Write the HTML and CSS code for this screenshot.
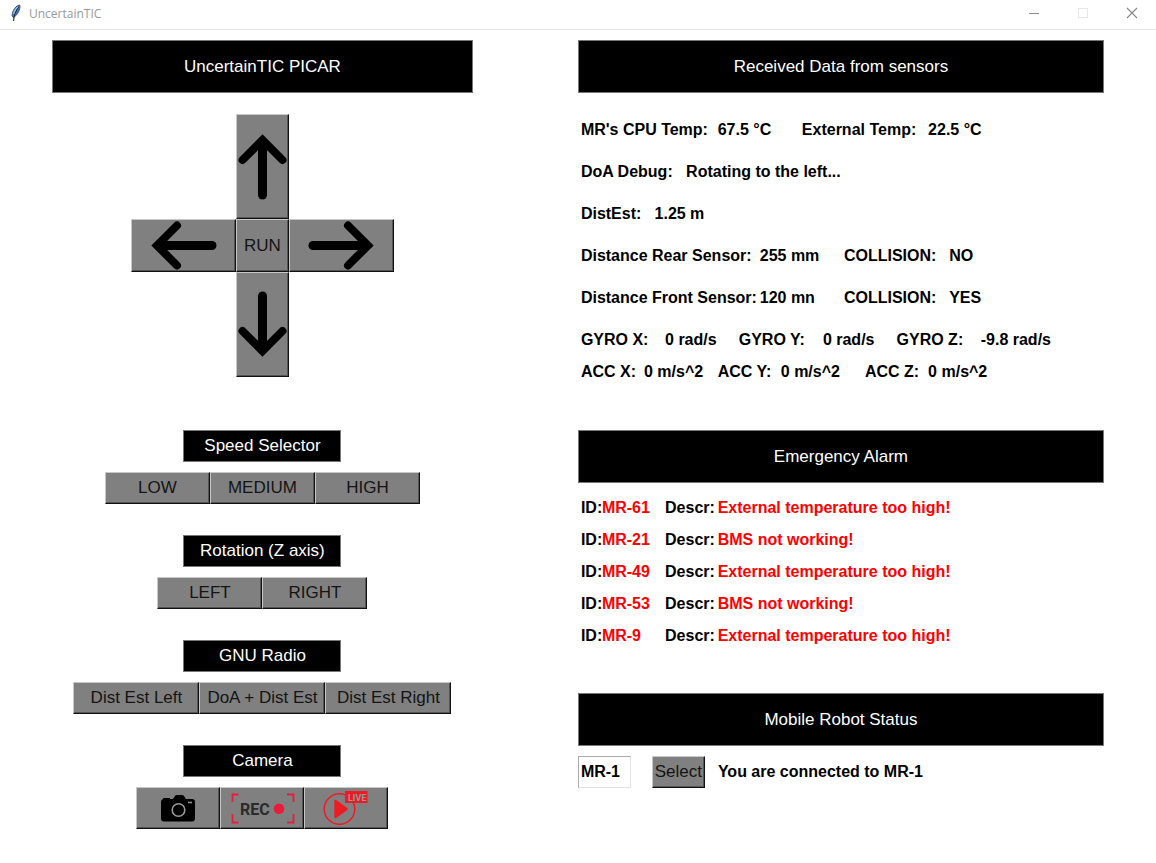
FILE: index.html
```html
<!DOCTYPE html>
<html lang="en">
<head>
<meta charset="utf-8">
<meta name="viewport" content="width=device-width, initial-scale=1">
<title>UncertainTIC</title>
<link rel="stylesheet" href="styles.css">
</head>
<body>
<header class="titlebar">
  <svg class="feather" viewBox="0 0 12 18" aria-hidden="true">
    <path d="M9.800 1C6 1.500 2.500 6 2 11.500L3.200 13.600C7.500 11.500 10.800 5 9.800 1Z" fill="#4377bd" stroke="#33465e" stroke-width="0.800"/>
    <path d="M8.500 3C5.500 7 3.800 11 3.600 17" fill="none" stroke="#222" stroke-width="1.100"/>
    <path d="M7.800 2.800C5.800 4.500 4.200 7.500 3.600 10" fill="none" stroke="#9dc0ea" stroke-width="1.200"/>
  </svg>
  <span class="titlebar-name">UncertainTIC</span>
  <div class="window-controls">
    <button type="button" aria-label="Minimize"><svg viewBox="0 0 12 12"><path d="M1 6.500H11" stroke="#8c8c8c"/></svg></button>
    <button type="button" aria-label="Maximize" disabled><svg viewBox="0 0 12 12"><rect x="1.500" y="1.500" width="9" height="9" fill="none" stroke="#e6e6e6"/></svg></button>
    <button type="button" aria-label="Close"><svg viewBox="0 0 12 12"><path d="M1 1L11 11M11 1L1 11" stroke="#858585" stroke-width="1.100"/></svg></button>
  </div>
</header>

<main class="layout">
  <section class="controls">
    <h1 class="banner">UncertainTIC PICAR</h1>

    <div class="dpad">
      <button type="button" class="key up" aria-label="Forward"><svg class="arrow-v" viewBox="0 0 53 105"><path class="wing" d="M6.500 46L26.500 26L46.500 46"/><path class="stem" d="M26.500 28V81"/></svg></button>
      <button type="button" class="key left" aria-label="Left"><svg class="arrow-h" viewBox="0 0 105 53"><path class="wing" d="M46 6.500L26 26.500L46 46.500"/><path class="stem" d="M28 26.500H81"/></svg></button>
      <button type="button" class="key run">RUN</button>
      <button type="button" class="key right" aria-label="Right"><svg class="arrow-h" viewBox="0 0 105 53"><path class="wing" d="M59 6.500L79 26.500L59 46.500"/><path class="stem" d="M77 26.500H24"/></svg></button>
      <button type="button" class="key down" aria-label="Backward"><svg class="arrow-v" viewBox="0 0 53 105"><path class="wing" d="M6.500 59L26.500 79L46.500 59"/><path class="stem" d="M26.500 77V24"/></svg></button>
    </div>

    <div class="groups">
      <div class="group">
        <h2 class="tag">Speed Selector</h2>
        <div class="keys medium">
          <button type="button" class="key">LOW</button>
          <button type="button" class="key">MEDIUM</button>
          <button type="button" class="key">HIGH</button>
        </div>
      </div>
      <div class="group">
        <h2 class="tag">Rotation (Z axis)</h2>
        <div class="keys medium">
          <button type="button" class="key">LEFT</button>
          <button type="button" class="key">RIGHT</button>
        </div>
      </div>
      <div class="group">
        <h2 class="tag">GNU Radio</h2>
        <div class="keys wide">
          <button type="button" class="key">Dist Est Left</button>
          <button type="button" class="key">DoA + Dist Est</button>
          <button type="button" class="key">Dist Est Right</button>
        </div>
      </div>
      <div class="group">
        <h2 class="tag">Camera</h2>
        <div class="keys camera">
          <button type="button" class="key" aria-label="Take photo">
            <svg viewBox="0 0 84 42">
              <path d="M27 12Q27 11 28 11H34V12H37L39 9Q39.500 8 41 8H46Q47.500 8 48 9L50 12H56Q59 12 59 15V31Q59 34.500 56 34.500H28Q25 34.500 25 31V15Q25 12.500 27 12Z"/>
              <circle cx="42.500" cy="23" r="6.300" fill="none" stroke="#999" stroke-width="1.600"/>
              <path d="M52 15.500H56" stroke="#999" stroke-width="1.500"/>
            </svg>
          </button>
          <button type="button" class="key" aria-label="Record">
            <svg viewBox="0 0 84 42">
              <path d="M18.500 7.500H12.500V15M12.500 27V35.500H18.500M67 7.500H73.500V15M73.500 27V35.500H67" fill="none" stroke="#ea1c3c" stroke-width="1.800"/>
              <text class="rec-text" x="20" y="27.500">REC</text>
              <circle cx="59" cy="21.800" r="5.300" fill="#ea1c3c"/>
            </svg>
          </button>
          <button type="button" class="key" aria-label="Live stream">
            <svg viewBox="0 0 84 42">
              <circle cx="35.500" cy="22" r="15.300" fill="none" stroke="#ed1c24" stroke-width="1.500"/>
              <path d="M31.500 14L42.500 22L31.500 30Z" fill="#ed1c24" stroke="#ed1c24" stroke-width="2.500" stroke-linejoin="round"/>
              <path d="M41 4H63.500V16H41Z" fill="#ed1c24"/>
              <text class="live-text" x="44" y="13.500">LIVE</text>
            </svg>
          </button>
        </div>
      </div>
    </div>
  </section>

  <div class="monitor">
    <section>
      <h2 class="banner">Received Data from sensors</h2>
      <div class="readings">
        <div class="row"><span class="s13">MR's CPU Temp:</span><span class="s8">67.5 °C</span><span class="s12">External Temp:</span><span class="s6">22.5 °C</span></div>
        <div class="row"><span class="s10">DoA Debug:</span><span class="s20">Rotating to the left...</span></div>
        <div class="row"><span class="s7">DistEst:</span><span class="s8">1.25 m</span></div>
        <div class="row"><span class="s17">Distance Rear Sensor:</span><span class="s8">255 mm</span><span class="s10">COLLISION:</span><span class="s5">NO</span></div>
        <div class="row"><span class="s17">Distance Front Sensor:</span><span class="s8">120 mn</span><span class="s10">COLLISION:</span><span class="s5">YES</span></div>
        <div class="axes">
          <div class="row"><span class="s8">GYRO X:</span><span class="s7">0 rad/s</span><span class="s8">GYRO Y:</span><span class="s7">0 rad/s</span><span class="s8">GYRO Z:</span><span class="s10">-9.8 rad/s</span></div>
          <div class="row"><span class="s6">ACC X:</span><span class="s7">0 m/s^2</span><span class="s6">ACC Y:</span><span class="s8">0 m/s^2</span><span class="s6">ACC Z:</span><span class="s7">0 m/s^2</span></div>
        </div>
      </div>
    </section>

    <section>
      <h2 class="banner">Emergency Alarm</h2>
      <div class="alarms">
        <div class="row"><span class="s2">ID:</span><span class="s6 alert">MR-61</span><span class="s5">Descr:</span><span class="s30 alert">External temperature too high!</span></div>
        <div class="row"><span class="s2">ID:</span><span class="s6 alert">MR-21</span><span class="s5">Descr:</span><span class="s30 alert">BMS not working!</span></div>
        <div class="row"><span class="s2">ID:</span><span class="s6 alert">MR-49</span><span class="s5">Descr:</span><span class="s30 alert">External temperature too high!</span></div>
        <div class="row"><span class="s2">ID:</span><span class="s6 alert">MR-53</span><span class="s5">Descr:</span><span class="s30 alert">BMS not working!</span></div>
        <div class="row"><span class="s2">ID:</span><span class="s6 alert">MR-9</span><span class="s5">Descr:</span><span class="s30 alert">External temperature too high!</span></div>
      </div>
    </section>

    <section>
      <h2 class="banner">Mobile Robot Status</h2>
      <form class="status">
        <input class="robot-id" type="text" value="MR-1" aria-label="Mobile robot ID">
        <button type="button" class="key select">Select</button>
        <output>You are connected to MR-1</output>
      </form>
    </section>
  </div>
</main>
</body>
</html>
```

FILE: styles.css
```css
* {
  box-sizing: border-box;
}

body {
  margin: 0;
  background: #fff;
  color: #000;
  font-family: "Liberation Sans", Arial, sans-serif;
  font-size: 16px;
}

.titlebar {
  display: flex;
  align-items: center;
  height: 30px;
  padding: 0 0 3px 10px;
  border-bottom: 1px solid #e6e6e6;
}

.feather {
  width: 12px;
  height: 18px;
}

.titlebar-name {
  margin-left: 7px;
  color: #999;
  font-family: "Open Sans", "Noto Sans", sans-serif;
  font-size: 12px;
}

.window-controls {
  display: flex;
  margin-left: auto;
}

.window-controls button {
  display: flex;
  align-items: center;
  justify-content: center;
  width: 49px;
  height: 26px;
  padding: 0;
  border: 0;
  background: none;
}

.window-controls svg {
  width: 12px;
  height: 12px;
}

.layout {
  display: grid;
  grid-template-columns: 4fr 5fr;
  gap: 105px;
  padding: 10px 52px;
}

.banner,
.tag {
  display: flex;
  align-items: center;
  justify-content: center;
  margin: 0;
  border: 1px solid #777;
  background: #000;
  color: #fff;
  font-size: 17px;
  font-weight: 400;
}

.banner {
  height: 53px;
}

.tag {
  width: 158px;
  height: 32px;
}

.controls,
.groups,
.group {
  display: flex;
  flex-direction: column;
}

.key {
  display: flex;
  align-items: center;
  justify-content: center;
  padding: 0;
  border: 1px solid;
  border-color: #c8c8c8 #111 #111 #c8c8c8;
  background: #808080;
  box-shadow: inset -1px -1px #555;
  color: #141414;
  font: 17px "Liberation Sans", Arial, sans-serif;
  white-space: nowrap;
}

.dpad {
  display: grid;
  grid-template: 105px 53px 105px / 105px 53px 105px;
  align-self: center;
  margin: 21px 0 53px;
}

.up { grid-area: 1 / 2; }
.left { grid-area: 2 / 1; }
.run { grid-area: 2 / 2; }
.right { grid-area: 2 / 3; }
.down { grid-area: 3 / 2; }

.arrow-v {
  flex: none;
  width: 53px;
  height: 105px;
}

.arrow-h {
  flex: none;
  width: 105px;
  height: 53px;
}

.wing,
.stem {
  fill: none;
  stroke: #000;
  stroke-linecap: round;
}

.wing { stroke-width: 8; }
.stem { stroke-width: 9; }

.groups {
  gap: 31px;
}

.group {
  align-items: center;
  gap: 10px;
}

.keys {
  display: flex;
}

.keys .key {
  height: 32px;
}

.medium .key { width: 105px; }
.wide .key { width: 126px; }

.camera .key {
  width: 84px;
  height: 42px;
}

.camera svg {
  flex: none;
  width: 84px;
  height: 42px;
}

.rec-text {
  fill: #2b2b2b;
  font: 700 16px Roboto, sans-serif;
}

.live-text {
  fill: #999;
  font: 700 9px Roboto, sans-serif;
}

.monitor {
  display: flex;
  flex-direction: column;
  font-weight: 700;
}

.readings {
  display: flex;
  flex-direction: column;
  gap: 10px;
  padding: 21px 0 42px;
}

.alarms {
  padding: 9px 0 41px;
}

.row {
  display: grid;
  grid-template-columns: repeat(50, 1fr);
  line-height: 32px;
}

.row span {
  min-width: 0;
  padding-left: 3px;
  white-space: nowrap;
}

.row .alert {
  color: #f00;
}

.s2 { grid-column: span 2; }
.s5 { grid-column: span 5; }
.s6 { grid-column: span 6; }
.s7 { grid-column: span 7; }
.s8 { grid-column: span 8; }
.s10 { grid-column: span 10; }
.s12 { grid-column: span 12; }
.s13 { grid-column: span 13; }
.s17 { grid-column: span 17; }
.s20 { grid-column: span 20; }
.s30 { grid-column: span 30; }

.status {
  display: flex;
  align-items: center;
  padding-top: 10px;
}

.robot-id {
  width: 53px;
  height: 32px;
  padding: 0 2px;
  border: 1px solid;
  border-color: #aaa #e3e3e3 #e3e3e3 #aaa;
  border-radius: 0;
  color: #000;
  font: 700 16px "Liberation Sans", Arial, sans-serif;
}

.select {
  width: 53px;
  height: 32px;
  margin: 0 13px 0 21px;
}
```
